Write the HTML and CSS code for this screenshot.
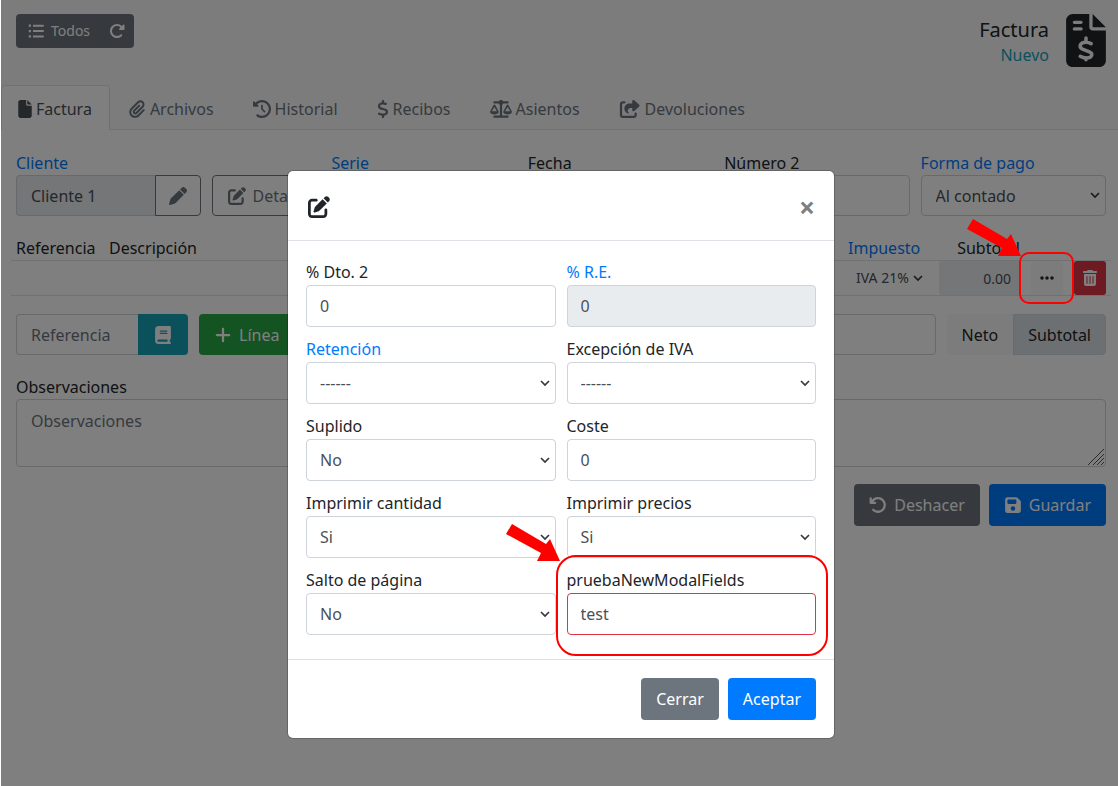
FILE: index.html
```html
<!DOCTYPE html>
<html lang="es">
<head>
<meta charset="utf-8">
<meta name="viewport" content="width=device-width, initial-scale=1">
<title>Factura</title>
<link rel="stylesheet" href="styles.css">
</head>
<body>
<svg class="sprite" aria-hidden="true">
  <symbol id="i-list" viewBox="0 0 512 512"><path d="M24 48h72v72H24zM24 220h72v72H24zM24 392h72v72H24zM160 56h320a24 24 0 0 1 0 64H160zM160 224h320a24 24 0 0 1 0 64H160zM160 396h320a24 24 0 0 1 0 64H160z"/></symbol>
  <symbol id="i-redo" viewBox="0 0 512 512"><path d="M463.500 224H472c13.300 0 24-10.700 24-24V72c0-9.700-5.800-18.500-14.800-22.200s-19.300-1.700-26.200 5.200L413.400 96.600c-87.600-86.500-228.700-86.200-315.800 1c-87.500 87.500-87.500 229.300 0 316.800s229.300 87.500 316.800 0c12.500-12.500 12.500-32.800 0-45.300s-32.800-12.500-45.300 0c-62.500 62.500-163.800 62.500-226.300 0s-62.500-163.800 0-226.300c62.200-62.200 162.700-62.500 225.300-1L327 183c-6.900 6.900-8.900 17.200-5.200 26.200s12.500 14.800 22.200 14.800H463.500z"/></symbol>
  <symbol id="i-undo" viewBox="0 0 512 512"><path d="M125.700 160H176c17.700 0 32 14.300 32 32s-14.300 32-32 32H48c-17.700 0-32-14.300-32-32V64c0-17.700 14.300-32 32-32s32 14.300 32 32v51.200L97.600 97.600c87.500-87.500 229.300-87.500 316.800 0s87.500 229.300 0 316.800s-229.300 87.500-316.800 0c-12.500-12.500-12.500-32.800 0-45.300s32.800-12.500 45.300 0c62.500 62.500 163.800 62.500 226.300 0s62.500-163.800 0-226.300s-163.800-62.500-226.300 0L125.700 160z"/></symbol>
  <symbol id="i-file" viewBox="0 0 384 512"><path d="M0 64C0 28.700 28.700 0 64 0H224V128c0 17.700 14.300 32 32 32H384V448c0 35.300-28.700 64-64 64H64c-35.300 0-64-28.700-64-64V64zm384 64H256V0L384 128z"/></symbol>
  <symbol id="i-invoice" viewBox="0 0 384 512"><path fill-rule="evenodd" d="M64 0C28.700 0 0 28.700 0 64V448c0 35.300 28.700 64 64 64H320c35.300 0 64-28.700 64-64V160H256c-17.700 0-32-14.300-32-32V0H64zM256 0V128H384L256 0zM64 80c0-8.800 7.200-16 16-16h64c8.800 0 16 7.200 16 16s-7.200 16-16 16H80c-8.800 0-16-7.200-16-16zm0 64c0-8.800 7.200-16 16-16h64c8.800 0 16 7.200 16 16s-7.200 16-16 16H80c-8.800 0-16-7.200-16-16z"/><path class="cutout" d="M192 232v30m0 160v20M242 286c-16-9-34-14-53-14-58 0-69 50-31 67l67 26c40 18 26 61-30 61-22 0-43-7-59-17"/></symbol>
  <symbol id="i-clip" viewBox="0 0 448 512"><path d="M364.200 83.800c-24.400-24.400-64-24.400-88.400 0l-184 184c-42.100 42.100-42.100 110.300 0 152.400s110.300 42.100 152.400 0l152-152c10.900-10.900 28.700-10.900 39.600 0s10.900 28.700 0 39.600l-152 152c-64 64-167.600 64-231.600 0s-64-167.600 0-231.600l184-184c46.300-46.300 121.300-46.300 167.600 0s46.300 121.300 0 167.600l-176 176c-28.600 28.600-75 28.600-103.600 0s-28.600-75 0-103.600l144-144c10.900-10.900 28.700-10.900 39.600 0s10.900 28.700 0 39.600l-144 144c-6.700 6.700-6.700 17.700 0 24.400s17.700 6.700 24.400 0l176-176c24.400-24.400 24.400-64 0-88.400z"/></symbol>
  <symbol id="i-history" viewBox="0 0 512 512"><path d="M75 75L41 41C25.900 25.900 0 36.600 0 57.900V168c0 13.300 10.700 24 24 24H134.100c21.400 0 32.100-25.900 17-41l-30.800-30.800C155 85.500 203 64 256 64c106 0 192 86 192 192s-86 192-192 192c-40.800 0-78.600-12.700-109.700-34.400c-14.500-10.100-34.400-6.600-44.600 7.900s-6.600 34.400 7.900 44.600C151.200 495 201.700 512 256 512c141.400 0 256-114.600 256-256S397.400 0 256 0C185.300 0 121.300 28.700 75 75zm181 53c-13.300 0-24 10.700-24 24V256c0 6.400 2.500 12.500 7 17l72 72c9.400 9.400 24.600 9.400 33.900 0s9.400-24.600 0-33.900l-65-65V152c0-13.300-10.700-24-24-24z"/></symbol>
  <symbol id="i-dollar" viewBox="0 0 320 512"><path d="M160 0c17.700 0 32 14.300 32 32V67.700c1.600 .2 3.100 .4 4.700 .7c.4 .1 .7 .1 1.100 .2l48 8.800c17.400 3.200 28.900 19.900 25.700 37.200s-19.900 28.900-37.200 25.700l-47.500-8.700c-31.300-4.600-58.900-1.500-78.300 6.200s-27.200 18.300-29 28.100c-2 10.700-.5 16.700 1.200 20.400c1.800 3.900 5.500 8.300 12.800 13.200c16.300 10.700 41.300 17.700 73.700 26.300l2.900 .8c28.600 7.600 63.600 16.800 89.600 33.800c14.200 9.300 27.600 21.900 35.900 39.500c8.500 17.900 10.300 37.900 6.400 59.200c-6.900 38-33.100 63.400-65.600 76.700c-13.700 5.600-28.600 9.200-44.400 11V480c0 17.700-14.300 32-32 32s-32-14.300-32-32V445.100c-24.400-3.800-66-14.500-93-26.500c-16.100-7.200-23.400-26.100-16.200-42.200s26.100-23.400 42.200-16.200c20.900 9.300 55.300 18.500 75.200 21.600c31.900 4.700 58.200 2 76-5.300c16.900-6.900 24.600-16.900 26.800-28.900c1.900-10.600 .4-16.700-1.300-20.400c-1.900-4-5.600-8.400-13-13.300c-16.400-10.700-41.500-17.700-74-26.300C119.400 279.300 84.400 270 58.400 253c-14.200-9.300-27.500-22-35.800-39.600c-8.400-17.900-10.100-37.900-6.100-59.200C23.700 116 52.300 91.200 84.800 78.300c13.300-5.300 27.900-8.900 43.200-11V32c0-17.700 14.300-32 32-32z"/></symbol>
  <symbol id="i-scale" viewBox="0 0 640 512"><path d="M128 32H260a64 64 0 0 1 120 0H512a32 32 0 0 1 0 64H384a80 80 0 0 1-32 40V448H512a32 32 0 0 1 0 64H128a32 32 0 0 1 0-64H288V136a80 80 0 0 1-32-40H128a32 32 0 0 1 0-64z"/><path fill-rule="evenodd" d="M0 336 103 143q25-35 50 0L256 336c-10 107-246 107-256 0zM55 320H201L128 195zM384 336 487 143q25-35 50 0L640 336c-10 107-246 107-256 0zM439 320H585L512 195z"/></symbol>
  <symbol id="i-share" viewBox="0 0 576 512"><path d="M352 224H305.500c-45 0-81.500 36.500-81.500 81.500c0 22.300 10.300 34.300 19.200 40.500c6.800 4.700 12.800 12 12.800 20.300c0 9.800-8 17.800-17.800 17.800h-2.500c-2.400 0-4.800-.4-7.100-1.400C210.800 374.800 128 333.400 128 240c0-79.500 64.500-144 144-144h80V34.700C352 15.500 367.500 0 386.700 0c8.600 0 16.800 3.200 23.200 8.900L548.100 133.300c7.600 6.800 11.900 16.500 11.900 26.700s-4.300 19.900-11.900 26.700l-139 125.100c-5.900 5.300-13.500 8.200-21.400 8.200H384c-17.700 0-32-14.300-32-32V224zM80 96c-8.800 0-16 7.200-16 16V432c0 8.800 7.200 16 16 16H400c8.800 0 16-7.200 16-16V384c0-17.700 14.300-32 32-32s32 14.300 32 32v48c0 44.200-35.800 80-80 80H80c-44.200 0-80-35.800-80-80V112C0 67.800 35.800 32 80 32h48c17.700 0 32 14.300 32 32s-14.300 32-32 32H80z"/></symbol>
  <symbol id="i-pen" viewBox="0 0 512 512"><path d="M362.700 19.300L314.300 67.700 444.300 197.700l48.400-48.400c25-25 25-65.500 0-90.500L453.300 19.300c-25-25-65.500-25-90.500 0zm-71 71L58.600 323.500c-10.400 10.400-18 23.300-22.200 37.400L1 481.200C-1.500 489.700 .8 498.800 7 505s15.300 8.500 23.700 6.100l120.300-35.400c14.100-4.200 27-11.800 37.400-22.200L421.700 220.300 291.700 90.300z"/></symbol>
  <symbol id="i-edit" viewBox="0 0 512 512"><path d="M471.600 21.700c-21.900-21.900-57.300-21.900-79.200 0L362.300 51.700l97.900 97.900 30.100-30.100c21.900-21.900 21.900-57.300 0-79.200L471.600 21.700zm-299.200 220c-6.100 6.100-10.800 13.600-13.500 21.900l-29.600 88.800c-2.900 8.600-.6 18.100 5.800 24.600s15.900 8.700 24.600 5.800l88.800-29.600c8.200-2.700 15.700-7.400 21.900-13.500L437.700 172.300 339.700 74.300 172.400 241.700zM96 64C43 64 0 107 0 160V416c0 53 43 96 96 96H352c53 0 96-43 96-96V320c0-17.700-14.300-32-32-32s-32 14.300-32 32v96c0 17.700-14.300 32-32 32H96c-17.700 0-32-14.300-32-32V160c0-17.700 14.300-32 32-32h96c17.700 0 32-14.300 32-32s-14.300-32-32-32H96z"/></symbol>
  <symbol id="i-book" viewBox="0 0 448 512"><path d="M96 0C43 0 0 43 0 96V416c0 53 43 96 96 96H384h32c17.700 0 32-14.300 32-32s-14.300-32-32-32V384c17.700 0 32-14.300 32-32V32c0-17.700-14.300-32-32-32H384 96zm0 384H352v64H96c-17.700 0-32-14.300-32-32s14.300-32 32-32zm32-240c0-8.800 7.200-16 16-16H336c8.800 0 16 7.200 16 16s-7.200 16-16 16H144c-8.800 0-16-7.200-16-16zm16 48H336c8.800 0 16 7.200 16 16s-7.200 16-16 16H144c-8.800 0-16-7.200-16-16s7.200-16 16-16z"/></symbol>
  <symbol id="i-plus" viewBox="0 0 448 512"><path d="M224 48c18 0 32 14 32 32v144h144a32 32 0 0 1 0 64H256v144a32 32 0 0 1-64 0V288H48a32 32 0 0 1 0-64h144V80c0-18 14-32 32-32z"/></symbol>
  <symbol id="i-save" viewBox="0 0 448 512"><path d="M64 32C28.700 32 0 60.700 0 96V416c0 35.300 28.700 64 64 64H384c35.300 0 64-28.700 64-64V173.300c0-17-6.700-33.300-18.700-45.300L352 50.700C340 38.700 323.700 32 306.700 32H64zm0 96c0-17.700 14.300-32 32-32H288c17.700 0 32 14.300 32 32v64c0 17.700-14.300 32-32 32H96c-17.700 0-32-14.300-32-32V128zM224 288a64 64 0 1 1 0 128 64 64 0 1 1 0-128z"/></symbol>
  <symbol id="i-trash" viewBox="0 0 448 512"><path fill-rule="evenodd" d="M135.200 17.700L128 32H32C14.300 32 0 46.300 0 64S14.300 96 32 96H416c17.700 0 32-14.300 32-32s-14.300-32-32-32H320l-7.200-14.300C307.400 6.800 296.300 0 284.200 0H163.800c-12.100 0-23.200 6.800-28.600 17.700zM32 128H416V448c0 35.300-28.700 64-64 64H96c-35.300 0-64-28.700-64-64zM112 200V440h32V200zM208 200V440h32V200zM304 200V440h32V200z"/></symbol>
  <symbol id="i-dots" viewBox="0 0 448 512"><circle cx="64" cy="256" r="56"/><circle cx="224" cy="256" r="56"/><circle cx="384" cy="256" r="56"/></symbol>
  <symbol id="i-arrow" viewBox="0 0 54 38"><path d="M0 10 6 0 40 20 44 15 54 37 31 37 35 29z"/></symbol>
</svg>

<div class="app">
  <header class="header">
    <div class="btn-group">
      <a class="btn btn-sm btn-secondary" href="#"><svg class="icon"><use href="#i-list"/></svg><span>Todos</span></a>
      <button class="btn btn-sm btn-secondary" type="button" aria-label="Recargar"><svg class="icon"><use href="#i-redo"/></svg></button>
    </div>
    <div class="title-block">
      <div class="title-text">
        <h1 class="title">Factura</h1>
        <span class="status">Nuevo</span>
      </div>
      <svg class="title-icon"><use href="#i-invoice"/></svg>
    </div>
  </header>

  <nav class="tabs">
    <a class="tab active" href="#"><svg class="icon icon-narrow"><use href="#i-file"/></svg>Factura</a>
    <a class="tab" href="#"><svg class="icon"><use href="#i-clip"/></svg>Archivos</a>
    <a class="tab" href="#"><svg class="icon"><use href="#i-history"/></svg>Historial</a>
    <a class="tab" href="#"><svg class="icon icon-thin"><use href="#i-dollar"/></svg>Recibos</a>
    <a class="tab" href="#"><svg class="icon icon-wide"><use href="#i-scale"/></svg>Asientos</a>
    <a class="tab" href="#"><svg class="icon icon-wide"><use href="#i-share"/></svg>Devoluciones</a>
  </nav>

  <main class="pane">
    <form class="fields">
      <div class="field">
        <label for="cliente"><a href="#">Cliente</a></label>
        <div class="input-group">
          <input class="control" id="cliente" value="Cliente 1" readonly>
          <button class="btn btn-outline" type="button" aria-label="Editar cliente"><svg class="icon"><use href="#i-pen"/></svg></button>
        </div>
      </div>
      <button class="btn btn-outline detail" type="button"><svg class="icon"><use href="#i-edit"/></svg><span>Detalle</span></button>
      <div class="field">
        <label for="serie"><a href="#">Serie</a></label>
        <select class="control" id="serie"></select>
      </div>
      <div class="field">
        <label for="fecha">Fecha</label>
        <input class="control" id="fecha">
      </div>
      <div class="field">
        <label for="numero2">Número 2</label>
        <input class="control" id="numero2">
      </div>
      <div class="field">
        <label for="pago"><a href="#">Forma de pago</a></label>
        <select class="control" id="pago"><option>Al contado</option></select>
      </div>
    </form>

    <table class="lines">
      <thead>
        <tr>
          <th class="col-ref">Referencia</th>
          <th>Descripción</th>
          <th class="col-tax"><a href="#">Impuesto</a></th>
          <th class="col-sub">Subtotal</th>
          <th class="col-more"></th>
          <th class="col-del"></th>
        </tr>
      </thead>
      <tbody>
        <tr>
          <td></td>
          <td></td>
          <td><select class="cell-control cell-select" aria-label="Impuesto"><option>IVA 21%</option></select></td>
          <td><input class="cell-control cell-total" aria-label="Subtotal" value="0.00" readonly></td>
          <td><button class="cell-btn more" type="button" aria-label="Más"><svg class="icon"><use href="#i-dots"/></svg></button></td>
          <td><button class="cell-btn delete" type="button" aria-label="Eliminar"><svg class="icon"><use href="#i-trash"/></svg></button></td>
        </tr>
      </tbody>
    </table>

    <div class="toolbar">
      <div class="input-group ref-group">
        <input class="control" placeholder="Referencia" aria-label="Referencia">
        <button class="btn btn-info" type="button" aria-label="Catálogo"><svg class="icon"><use href="#i-book"/></svg></button>
      </div>
      <button class="btn btn-success" type="button"><svg class="icon"><use href="#i-plus"/></svg><span>Línea</span></button>
      <input class="control grow" aria-label="Línea rápida">
      <div class="btn-group">
        <button class="btn btn-light" type="button">Neto</button>
        <button class="btn btn-light pressed" type="button">Subtotal</button>
      </div>
    </div>

    <div class="notes">
      <label for="notes">Observaciones</label>
      <textarea class="control" id="notes" placeholder="Observaciones"></textarea>
      <svg class="grip" viewBox="0 0 16 16"><path d="M0 16 16 0M5 16 16 5M9 16 16 9M13 16 16 13"/></svg>
    </div>

    <div class="actions">
      <button class="btn btn-secondary" type="button"><svg class="icon"><use href="#i-undo"/></svg><span>Deshacer</span></button>
      <button class="btn btn-primary" type="button"><svg class="icon"><use href="#i-save"/></svg><span>Guardar</span></button>
    </div>
  </main>

  <div class="backdrop">
    <form class="modal" role="dialog" aria-label="Detalle de línea">
      <div class="modal-header">
        <svg class="modal-icon"><use href="#i-edit"/></svg>
        <button class="close" type="button" aria-label="Cerrar ventana">×</button>
      </div>
      <div class="modal-body">
        <div class="field"><label for="dto">% Dto. 2</label><input class="control" id="dto" value="0"></div>
        <div class="field"><label for="re"><a href="#">% R.E.</a></label><input class="control" id="re" value="0" readonly></div>
        <div class="field"><label for="ret"><a href="#">Retención</a></label><select class="control" id="ret"><option>------</option></select></div>
        <div class="field"><label for="exc">Excepción de IVA</label><select class="control" id="exc"><option>------</option></select></div>
        <div class="field"><label for="sup">Suplido</label><select class="control" id="sup"><option>No</option></select></div>
        <div class="field"><label for="coste">Coste</label><input class="control" id="coste" value="0"></div>
        <div class="field"><label for="cant">Imprimir cantidad</label><select class="control" id="cant"><option>Si</option></select></div>
        <div class="field"><label for="prec">Imprimir precios</label><select class="control" id="prec"><option>Si</option></select></div>
        <div class="field"><label for="salto">Salto de página</label><select class="control" id="salto"><option>No</option></select></div>
        <div class="field"><label for="prueba">pruebaNewModalFields</label><input class="control invalid" id="prueba" value="test">
          <div class="mark mark-field"></div>
          <svg class="arrow arrow-field"><use href="#i-arrow"/></svg>
        </div>
      </div>
      <div class="modal-footer">
        <button class="btn btn-secondary" type="button">Cerrar</button>
        <button class="btn btn-primary" type="button">Aceptar</button>
      </div>
    </form>
  </div>

  <div class="mark mark-more"></div>
  <svg class="arrow arrow-more"><use href="#i-arrow"/></svg>
</div>
</body>
</html>
```
FILE: styles.css
```css
* { box-sizing: border-box; }

body {
  margin: 0;
  background: #fff;
  color: #212529;
  font: 16px/26px "Noto Sans", "Open Sans", sans-serif;
}

a { color: #007bff; text-decoration: none; }
button, input, select, textarea { font: inherit; margin: 0; }
.sprite { display: none; }
.icon { width: 18px; height: 18px; fill: currentColor; flex: none; }
.icon-thin { width: 12px; }
.icon-narrow { width: 14px; }
.icon-wide { width: 22px; }

.app {
  position: relative;
  min-height: 100vh;
  margin-left: 1px;
  background: #fff;
}

/* Header */
.header {
  display: flex;
  justify-content: space-between;
  align-items: flex-start;
  height: 85px;
  padding: 14px 12px 0 15px;
  background: #f8f9fa;
}
.title-block { display: flex; gap: 17px; }
.title-text { text-align: right; padding-top: 3px; }
.title { margin: 0; font-size: 20px; line-height: 26px; font-weight: 400; }
.status { display: block; line-height: 24px; color: #17a2b8; }
.title-icon { width: 40px; height: 53px; fill: #212529; }
.cutout { fill: none; stroke: #f8f9fa; stroke-width: 34; stroke-linecap: round; stroke-linejoin: round; }

/* Buttons */
.btn {
  display: inline-flex;
  align-items: center;
  justify-content: center;
  gap: 7px;
  height: 42px;
  padding: 0 14px;
  border: 1px solid transparent;
  border-radius: 4px;
  color: #fff;
  white-space: nowrap;
}
.btn-sm { height: 34px; padding: 0 9px 0 11px; font-size: 14px; }
.btn-sm .icon { width: 16px; height: 16px; }
.btn-secondary { background: #6c757d; }
.btn-primary { background: #007bff; }
.btn-info { background: #17a2b8; width: 50px; }
.btn-success { background: #28a745; }
.btn-light { background: #f8f9fa; color: #212529; }
.btn-light.pressed { background: #dae0e5; border-color: #d3d9df; }
.btn-outline { background: #fff; border-color: #6c757d; color: #6c757d; }
.btn-group { display: flex; }
.btn-group > :first-child { border-radius: 4px 0 0 4px; }
.btn-group > :last-child { border-radius: 0 4px 4px 0; }
.btn-group .btn-sm:last-child { padding: 0 8px; }

/* Tabs */
.tabs {
  display: flex;
  height: 45px;
  background: #f8f9fa;
  border-bottom: 1px solid #dee2e6;
}
.tab {
  display: flex;
  align-items: center;
  gap: 4px;
  height: 45px;
  padding: 2px 20px 0 17px;
  border: 1px solid transparent;
  border-bottom: 0;
  border-radius: 4px 4px 0 0;
  color: #6c757d;
}
.tab.active {
  padding-right: 17px;
  padding-left: 16px;
  background: #fff;
  border-color: #dee2e6;
  color: #495057;
}

/* Form controls */
.pane { padding: 18px 12px 0 15px; }
.fields {
  display: grid;
  grid-template-columns: 1fr 108px repeat(4, 1fr);
  gap: 11px;
  align-items: end;
}
.field { display: flex; flex-direction: column; min-width: 0; position: relative; }
.field label, .notes label { line-height: 28px; height: 27px; }
.fields label, .notes label { line-height: 30px; }
.control {
  width: 100%;
  min-width: 0;
  height: 42px;
  padding: 0 14px;
  border: 1px solid #ced4da;
  border-radius: 4px;
  background: #fff;
  color: #495057;
}
.modal .control { padding: 0 13px; }
.fields .control, .fields .btn, .toolbar .control, .toolbar .btn { height: 41px; }
.control::placeholder { color: #6c757d; opacity: 1; }
.control[readonly] { background: #e9ecef; }
.control.invalid { border-color: #dc3545; }
select { appearance: none; }
select.control, .cell-select {
  background: #fff url("data:image/svg+xml,%3Csvg xmlns='http://www.w3.org/2000/svg' viewBox='0 0 10 7'%3E%3Cpath d='M1 1l4 4 4-4' fill='none' stroke='%23343a40' stroke-width='1.7'/%3E%3C/svg%3E") no-repeat right 5px center / 10px 7px;
}
.input-group { display: flex; }
.input-group .control { border-radius: 4px 0 0 4px; border-right: 0; flex: 1; }
.input-group .btn { border-radius: 0 4px 4px 0; }
.input-group .btn-outline { padding: 0 13px; }

/* Invoice lines */
.lines {
  width: calc(100% + 10px);
  margin: 19px -5px 0;
  border-collapse: collapse;
  table-layout: fixed;
}
.lines tr { border-bottom: 1px solid #dee2e6; }
.lines th { height: 25px; padding: 1px 5px 0; line-height: 24px; font-weight: 400; text-align: left; white-space: nowrap; }
.lines td { height: 35px; padding: 0; }
.lines .col-ref { width: 93px; }
.lines .col-tax { width: 96px; }
.lines .col-sub { width: 81px; padding-left: 0; padding-right: 0; text-align: right; }
.lines .col-more { width: 54px; }
.lines .col-del { width: 37px; }
.cell-control {
  display: block;
  width: 100%;
  height: 34px;
  border: 0;
  border-radius: 3px;
  padding: 0 9px 0 13px;
  color: #495057;
  font-size: 14px;
}
.cell-select { background-position: right 16px center; }
.cell-total { background: #e9ecef; text-align: right; }
.cell-btn {
  display: flex;
  align-items: center;
  justify-content: center;
  width: 32px;
  height: 34px;
  padding: 0;
  border: 0;
  border-radius: 3px;
}
.cell-btn .icon { width: 16px; height: 16px; }
.more { margin: 0 auto; background: #f8f9fa; color: #212529; }
.delete { background: #dc3545; color: #fff; }

/* Toolbar, notes, actions */
.toolbar { display: flex; gap: 11px; margin-top: 18px; }
.ref-group { width: 172px; }
.grow { flex: 1; width: auto; }
.notes { position: relative; display: flex; flex-direction: column; margin-top: 17px; }
.notes .control { display: block; height: 68px; padding: 8px 14px; resize: none; }
.grip {
  position: absolute;
  right: 2px;
  bottom: 2px;
  width: 16px;
  height: 16px;
  fill: none;
  stroke: #555;
}
.actions { display: flex; justify-content: flex-end; gap: 9px; margin-top: 17px; }

/* Modal */
.backdrop {
  position: absolute;
  inset: 0;
  display: flex;
  justify-content: center;
  align-items: flex-start;
  padding: 171px 0 48px 3px;
  background: rgba(0, 0, 0, 0.5);
}
.modal {
  width: 546px;
  background: #fff;
  border-radius: 5px;
  box-shadow: 0 0 0 1px rgba(0, 0, 0, 0.2);
}
.modal-header {
  display: flex;
  justify-content: space-between;
  align-items: center;
  height: 70px;
  padding: 2px 18px 0 20px;
  border-bottom: 1px solid #dee2e6;
}
.modal-icon { width: 22px; height: 22px; fill: #212529; }
.close {
  width: 18px;
  padding: 0;
  border: 0;
  background: none;
  color: #7f7f7f;
  font-size: 28px;
  font-weight: 700;
  line-height: 26px;
}
.modal-body {
  display: grid;
  grid-template-columns: 1fr 1fr;
  gap: 8px 11px;
  padding: 17px 18px 24px;
}
.modal-footer {
  display: flex;
  justify-content: flex-end;
  gap: 9px;
  padding: 18px;
  border-top: 1px solid #dee2e6;
}

/* Red annotations */
.mark { position: absolute; border: 2px solid #f00; pointer-events: none; }
.mark-field { inset: -11px -12px -21px -11px; border-radius: 20px; }
.mark-more { top: 252px; right: 44px; width: 55px; height: 52px; border-radius: 10px; }
.arrow { position: absolute; width: 54px; height: 38px; fill: #f00; pointer-events: none; }
.arrow-field { left: -61px; top: -42px; }
.arrow-more { top: 219px; right: 97px; }
```
